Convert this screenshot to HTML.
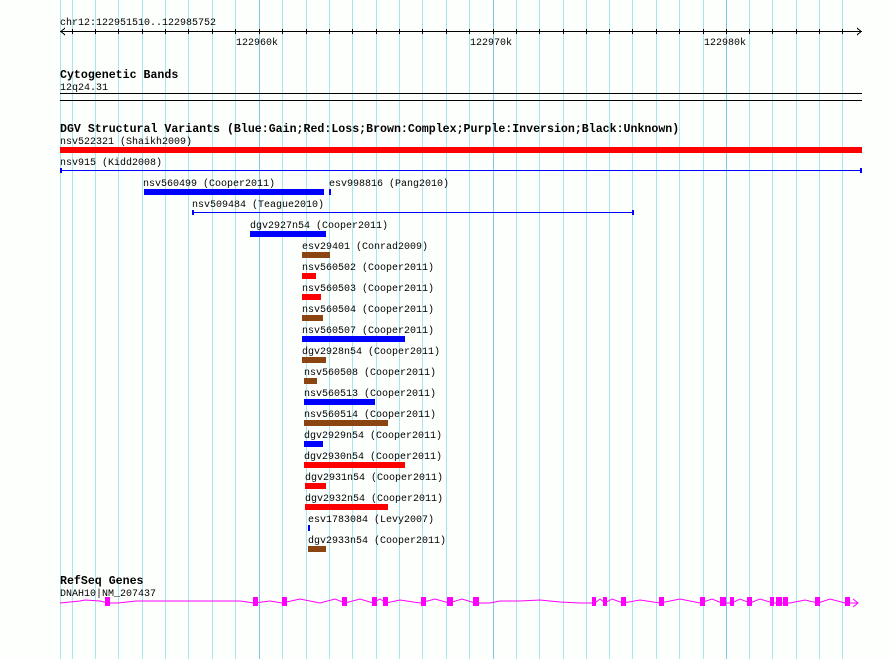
<!DOCTYPE html>
<html><head><meta charset="utf-8"><style>
html,body{margin:0;padding:0;background:#fdfffd;}
svg{display:block}
text{font-family:"Liberation Mono","DejaVu Sans Mono",monospace;font-size:10px;fill:#000}
.b{font-weight:bold;font-size:11.6px}
</style></head><body>
<svg width="890" height="659" xmlns="http://www.w3.org/2000/svg" shape-rendering="crispEdges">
<rect width="890" height="659" fill="#fdfffd"/>
<g stroke="#a8e6ee" stroke-width="1">
<line x1="60.5" y1="0" x2="60.5" y2="659"/>
<line x1="72.5" y1="0" x2="72.5" y2="659"/><line x1="95.5" y1="0" x2="95.5" y2="659"/><line x1="118.5" y1="0" x2="118.5" y2="659"/><line x1="142.5" y1="0" x2="142.5" y2="659"/><line x1="165.5" y1="0" x2="165.5" y2="659"/><line x1="188.5" y1="0" x2="188.5" y2="659"/><line x1="212.5" y1="0" x2="212.5" y2="659"/><line x1="235.5" y1="0" x2="235.5" y2="659"/>
<line x1="282.5" y1="0" x2="282.5" y2="659"/><line x1="306.5" y1="0" x2="306.5" y2="659"/><line x1="329.5" y1="0" x2="329.5" y2="659"/><line x1="352.5" y1="0" x2="352.5" y2="659"/><line x1="376.5" y1="0" x2="376.5" y2="659"/><line x1="399.5" y1="0" x2="399.5" y2="659"/><line x1="422.5" y1="0" x2="422.5" y2="659"/><line x1="446.5" y1="0" x2="446.5" y2="659"/><line x1="469.5" y1="0" x2="469.5" y2="659"/>
<line x1="516.5" y1="0" x2="516.5" y2="659"/><line x1="539.5" y1="0" x2="539.5" y2="659"/><line x1="563.5" y1="0" x2="563.5" y2="659"/><line x1="586.5" y1="0" x2="586.5" y2="659"/><line x1="609.5" y1="0" x2="609.5" y2="659"/><line x1="632.5" y1="0" x2="632.5" y2="659"/><line x1="656.5" y1="0" x2="656.5" y2="659"/><line x1="679.5" y1="0" x2="679.5" y2="659"/><line x1="703.5" y1="0" x2="703.5" y2="659"/>
<line x1="749.5" y1="0" x2="749.5" y2="659"/><line x1="772.5" y1="0" x2="772.5" y2="659"/><line x1="796.5" y1="0" x2="796.5" y2="659"/><line x1="819.5" y1="0" x2="819.5" y2="659"/><line x1="842.5" y1="0" x2="842.5" y2="659"/>
</g>
<g stroke="#7fc6e6"><line x1="259.5" y1="0" x2="259.5" y2="659"/><line x1="493.5" y1="0" x2="493.5" y2="659"/><line x1="726.5" y1="0" x2="726.5" y2="659"/></g>

<text x="60" y="25">chr12:122951510..122985752</text>
<g stroke="#000" fill="none">
<line x1="60" y1="31.5" x2="862" y2="31.5"/>
<polyline points="65,28 61,31.5 65,35"/><polyline points="857,28 861,31.5 857,35"/>
<path d="M72.5 29v5M95.5 29v5M118.5 29v5M142.5 29v5M165.5 29v5M188.5 29v5M212.5 29v5M235.5 29v5M259.5 29v5M282.5 29v5M306.5 29v5M329.5 29v5M352.5 29v5M376.5 29v5M399.5 29v5M422.5 29v5M446.5 29v5M469.5 29v5M493.5 29v5M516.5 29v5M539.5 29v5M563.5 29v5M586.5 29v5M609.5 29v5M632.5 29v5M656.5 29v5M679.5 29v5M703.5 29v5M726.5 29v5M749.5 29v5M772.5 29v5M796.5 29v5M819.5 29v5M842.5 29v5"/>
<line x1="60" y1="93.5" x2="862" y2="93.5"/><line x1="60" y1="100.5" x2="862" y2="100.5"/>
</g>
<text x="236" y="45">122960k</text><text x="470" y="45">122970k</text><text x="704" y="45">122980k</text>

<text class="b" x="60" y="78">Cytogenetic Bands</text>
<text x="60" y="90">12q24.31</text>

<text class="b" x="60" y="132">DGV Structural Variants (Blue:Gain;Red:Loss;Brown:Complex;Purple:Inversion;Black:Unknown)</text>
<text x="60" y="144">nsv522321 (Shaikh2009)</text>
<rect x="60" y="147" width="802" height="6" fill="#ff0000"/>
<text x="60" y="165">nsv915 (Kidd2008)</text>
<rect x="60" y="170" width="802" height="1" fill="#0000ff"/><rect x="60" y="168" width="2" height="5" fill="#0000ff"/><rect x="860" y="168" width="2" height="5" fill="#0000ff"/>
<text x="143" y="186">nsv560499 (Cooper2011)</text><rect x="144" y="189" width="180" height="6" fill="#0000ff"/>
<text x="329" y="186">esv998816 (Pang2010)</text><rect x="329" y="189" width="2" height="6" fill="#0000ff"/>
<text x="192" y="207">nsv509484 (Teague2010)</text>
<rect x="192" y="212" width="441" height="1" fill="#0000ff"/><rect x="192" y="210" width="2" height="5" fill="#0000ff"/><rect x="632" y="210" width="2" height="5" fill="#0000ff"/>
<text x="250" y="228">dgv2927n54 (Cooper2011)</text><rect x="250" y="231" width="76" height="6" fill="#0000ff"/>
<text x="302" y="249">esv29401 (Conrad2009)</text><rect x="302" y="252" width="28" height="6" fill="#8b4513"/>
<text x="302" y="270">nsv560502 (Cooper2011)</text><rect x="302" y="273" width="14" height="6" fill="#ff0000"/>
<text x="302" y="291">nsv560503 (Cooper2011)</text><rect x="302" y="294" width="19" height="6" fill="#ff0000"/>
<text x="302" y="312">nsv560504 (Cooper2011)</text><rect x="302" y="315" width="21" height="6" fill="#8b4513"/>
<text x="302" y="333">nsv560507 (Cooper2011)</text><rect x="302" y="336" width="103" height="6" fill="#0000ff"/>
<text x="302" y="354">dgv2928n54 (Cooper2011)</text><rect x="302" y="357" width="24" height="6" fill="#8b4513"/>
<text x="304" y="375">nsv560508 (Cooper2011)</text><rect x="304" y="378" width="13" height="6" fill="#8b4513"/>
<text x="304" y="396">nsv560513 (Cooper2011)</text><rect x="304" y="399" width="71" height="6" fill="#0000ff"/>
<text x="304" y="417">nsv560514 (Cooper2011)</text><rect x="304" y="420" width="84" height="6" fill="#8b4513"/>
<text x="304" y="438">dgv2929n54 (Cooper2011)</text><rect x="304" y="441" width="19" height="6" fill="#0000ff"/>
<text x="304" y="459">dgv2930n54 (Cooper2011)</text><rect x="304" y="462" width="101" height="6" fill="#ff0000"/>
<text x="305" y="480">dgv2931n54 (Cooper2011)</text><rect x="305" y="483" width="21" height="6" fill="#ff0000"/>
<text x="305" y="501">dgv2932n54 (Cooper2011)</text><rect x="305" y="504" width="83" height="6" fill="#ff0000"/>
<text x="308" y="522">esv1783084 (Levy2007)</text><rect x="308" y="525" width="2" height="6" fill="#0000ff"/>
<text x="308" y="543">dgv2933n54 (Cooper2011)</text><rect x="308" y="546" width="18" height="6" fill="#8b4513"/>

<text class="b" x="60" y="584">RefSeq Genes</text>
<text x="60" y="596">DNAH10|NM_207437</text>
<g stroke="#ff00ff" fill="none" shape-rendering="auto">
<polyline points="60,603 80,601 85,600 100,601 108,603 118,603 136,601 155,601 180,601 210,601 240,601 254,603 270,601 282,603 300,599 320,603 335,599 345,603 360,599 373,603 380,599 386,603 400,600 420,603 435,599 449,603 462,599 475,603 490,603 500,601 520,601 540,600 560,602 580,603 595,603 600,599 605,603 612,599 623,603 640,600 660,603 680,599 700,603 712,599 722,603 732,603 740,599 750,603 760,599 773,603 790,603 805,600 818,603 830,599 845,603 858,603"/>
<polyline points="853,599 858,603 853,607"/>
</g>
<g fill="#ff00ff">
<rect x="105" y="597" width="5" height="9"/><rect x="253" y="597" width="5" height="9"/><rect x="282" y="597" width="5" height="9"/><rect x="342" y="597" width="5" height="9"/><rect x="372" y="597" width="5" height="9"/><rect x="383" y="597" width="5" height="9"/><rect x="421" y="597" width="5" height="9"/><rect x="447" y="597" width="6" height="9"/><rect x="473" y="597" width="6" height="9"/><rect x="592" y="597" width="4" height="9"/><rect x="603" y="597" width="4" height="9"/><rect x="621" y="597" width="5" height="9"/><rect x="659" y="597" width="5" height="9"/><rect x="700" y="597" width="5" height="9"/><rect x="720" y="597" width="6" height="9"/><rect x="730" y="597" width="4" height="9"/><rect x="747" y="597" width="5" height="9"/><rect x="770" y="597" width="4" height="9"/><rect x="776" y="597" width="6" height="9"/><rect x="783" y="597" width="5" height="9"/><rect x="815" y="597" width="5" height="9"/><rect x="845" y="597" width="5" height="9"/>
</g>
</svg>
</body></html>
